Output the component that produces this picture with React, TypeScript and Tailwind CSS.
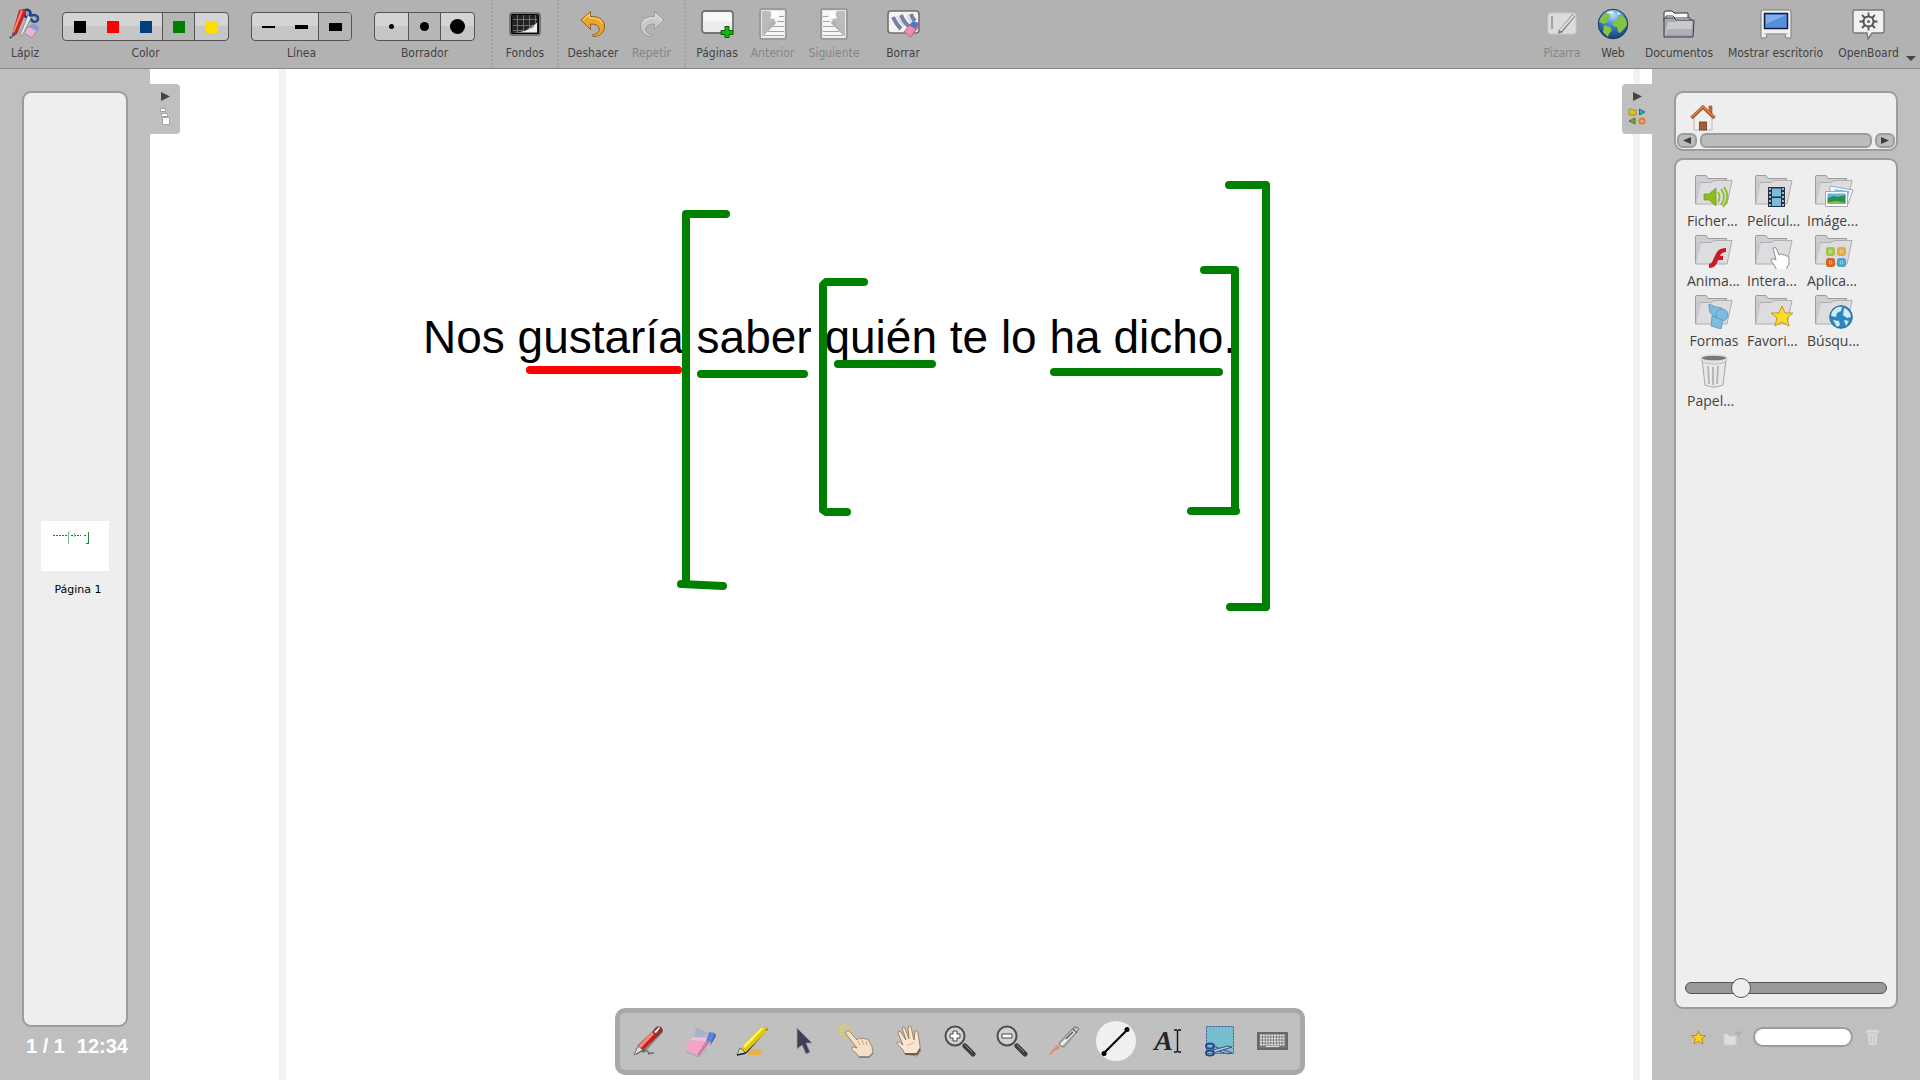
import type { ReactNode } from 'react';

const uiFont = 'font-["DejaVu_Sans_Condensed","Noto_Sans",sans-serif]';

function Svg({ w, h, box, children }: { w: number; h: number; box?: string; children: ReactNode }) {
  return (
    <svg width={w} height={h} viewBox={box ?? `0 0 ${w} ${h}`} fill="none" aria-hidden="true">
      {children}
    </svg>
  );
}

/* ---------- top toolbar icons ---------- */

const PencilCase = () => (
  <Svg w={32} h={32}>
    <path d="M15 3c3-3 8 0 6 4-1 3-4 3-5 1z" stroke="#1f3f74" strokeWidth="2.500" fill="#8fa3c4" />
    <path d="M22 8c5-3 9 2 6 5-3 2-6 0-6-3" stroke="#274b86" strokeWidth="2.500" />
    <path d="M19 7l3 3-9 18-2-1z" fill="#e6e8ec" stroke="#6c7688" strokeWidth=".7" />
    <path d="M10 2l5-1 2 3-9 22-5 3 1-6z" fill="#c92420" />
    <path d="M12 2l2 1-9 22-2 1z" fill="#ef8d86" />
    <path d="M4 24l3 2-5 4z" fill="#555" />
    <path d="M2 29l-1 1" stroke="#333" strokeWidth="2" />
    <path d="M18 20l7-4 5 4-7 10-8-5z" fill="#e9b3cf" stroke="#98708e" strokeWidth=".6" />
    <path d="M20 19l5-3 5 4-2 3z" fill="#7a9fd8" />
  </Svg>
);

const Grid = () => (
  <Svg w={32} h={24}>
    <rect x="1" y="1" width="30" height="22" rx="2.5" fill="#222" stroke="#777" strokeWidth="2" />
    <rect x="2.5" y="2.5" width="27" height="19" rx="1.5" stroke="#050505" />
    <path d="M8.500 3v17M14.500 3v17M20.500 3v14M26.500 3v8M4 7.500h24M4 13.500h20M4 18.500h10" stroke="#8c8c8c" strokeWidth=".7" />
    <path d="M4 20.500c10 0 18-3 24-10v10z" fill="#eee" />
    <path d="M11 19c7-1 12-4 16-9l-3 6z" fill="#999" />
  </Svg>
);

const Undo = ({ muted }: { muted?: boolean }) => (
  <Svg w={26} h={28}>
    <g transform={muted ? 'translate(26 0) scale(-1 1)' : undefined}>
      <path
        d="M1 10L10.500 1.500v5C20 6 25 11 24.500 17c-.5 5-4 9-9.500 9.500-2 .2-3-.5-3-1.500 6-1 8-4 7-7-1-3-4-4-8.500-4v5.500z"
        fill={muted ? '#c9c9c9' : '#eba62c'}
        stroke={muted ? '#9b9b9b' : '#8b651f'}
        strokeLinejoin="round"
      />
      <path d="M3 10L9.500 4v4C16 7.500 21 10 22.500 14" stroke={muted ? '#dedede' : '#f8cf70'} strokeWidth="1.200" />
    </g>
  </Svg>
);

const PagesIcon = () => (
  <Svg w={33} h={28}>
    <rect x="1" y="1" width="31" height="22" rx="3" fill="#ececec" stroke="#737373" strokeWidth="1.800" />
    <rect x="2.500" y="2.500" width="28" height="9" rx="1" fill="#f8f8f8" />
    <path d="M24 16.500h4v4h4v4h-4v3h-4v-3h-4v-4h4z" fill="#12b512" stroke="#075e07" strokeLinejoin="round" />
  </Svg>
);

const PageStep = ({ flip }: { flip?: boolean }) => (
  <Svg w={28} h={32}>
    <g transform={flip ? 'translate(28 0) scale(-1 1)' : undefined}>
      <rect x="1" y="1" width="26" height="30" rx="2" fill="#b9b9b9" stroke="#929292" strokeWidth="1.500" />
      <rect x="2.500" y="2.500" width="23" height="27" fill="#bcbcbc" stroke="#e8e8e8" />
      <path d="M11 3h14v26H3l14-14z" fill="#f6f6f6" />
      <path d="M17 15L12 11q5 1 5-3L4 28z" fill="#a4a4a4" opacity=".500" />
      <path d="M13 3q7 0 5 5-2 4-7 2 2-3 2-7z" fill="#fff" />
      <path d="M20 8.500h5M18 13.500h7M14 18.500h11M9 23.500h16M5 27.500h20" stroke="#a3a3a3" />
    </g>
  </Svg>
);

const ClearIcon = () => (
  <Svg w={33} h={28}>
    <rect x="1" y="1" width="31" height="22" rx="3" fill="#f4f4f4" stroke="#707070" strokeWidth="1.600" />
    <path d="M6 7q3 7 8 12M14 5q3 8 8 11M24 4q1 4 4 7" stroke="#7482a6" strokeWidth="4" />
    <path d="M10 6q3 6 7 10M20 5q2 5 5 8" stroke="#cfd5e4" strokeWidth="1.500" />
    <path d="M17 22l5-7 7 4-5 8z" fill="#f08bb2" stroke="#a04a74" strokeWidth=".6" />
    <path d="M22 15l4-4 6 2-3 6z" fill="#5377c9" />
    <path d="M29 19l3-6v4l-8 10z" fill="#c9527c" />
  </Svg>
);

const BoardIcon = () => (
  <Svg w={30} h={24}>
    <rect x="1" y="1" width="28" height="21" rx="2.500" fill="#dcdcdc" stroke="#c8c8c8" />
    <path d="M5 4v13" stroke="#8f8f8f" strokeWidth="1.500" />
    <path d="M13 20L27 3" stroke="#888" strokeWidth="4" />
    <path d="M13 19L27 3" stroke="#ddd" strokeWidth="2" />
    <path d="M11 22l1-4 3 2z" fill="#777" />
  </Svg>
);

const Globe = () => (
  <Svg w={32} h={32}>
    <defs>
      <radialGradient id="sea" cx=".5" cy=".2" r=".85">
        <stop stopColor="#b8def5" />
        <stop offset=".45" stopColor="#3d80c4" />
        <stop offset="1" stopColor="#12386e" />
      </radialGradient>
    </defs>
    <circle cx="16" cy="16" r="14.800" fill="url(#sea)" stroke="#1c3c66" />
    <path d="M4 9c3-4 7-4 9-3l-1 4-3 1 2 3-4 2-5-2zM7 17l6 2 2 3-3 4-1 3-5-5zM16 15l3-4 4-1 1-3c4 2 6 6 6 10l-3 4-4 4-2-1-1-5-4-1z" fill="#83c441" />
    <path d="M9 5c3-2 5-2 8-1l-2 2zM20 4l4 2-3 1z" fill="#e9f5f8" />
  </Svg>
);

const DocsIcon = () => (
  <Svg w={32} h={30}>
    <path d="M1 4q0-2 2-2h6l2 2h14v8H1z" fill="#f8f8f8" stroke="#333" />
    <path d="M3 7h7l2 2h15v7H3z" fill="#fff" stroke="#444" />
    <path d="M1 28V10q0-1 1-1h9l2 2h17q1 0 1 1l-1 16z" fill="#a8aab1" stroke="#383a40" />
    <path d="M5 13h8l2-1h14l-1 14H2z" fill="#c9cad0" />
    <path d="M2 27l3-7h24l-1 7z" fill="#9496a0" opacity=".5" />
  </Svg>
);

const DesktopIcon = () => (
  <Svg w={32} h={31}>
    <path d="M3 1h26q2 0 2 2v26h-5l-1-4H7l-1 4H1V3q0-2 2-2z" fill="#f0f0f0" stroke="#7c7c7c" />
    <path d="M4 25h24" stroke="#aaa" />
    <rect x="4.500" y="4.500" width="23" height="15" fill="#558edb" stroke="#15233c" strokeWidth="1.500" />
    <path d="M6 6h20L6 15z" fill="#81afea" />
  </Svg>
);

const OpenBoardIcon = () => (
  <Svg w={33} h={31}>
    <path d="M3 1h27q2 0 2 2v19q0 2-2 2H20l-4 6-1-6H3q-2 0-2-2V3q0-2 2-2z" fill="#f1f1f1" stroke="#777" strokeWidth="1.400" />
    <circle cx="16.500" cy="12.500" r="5" stroke="#555" strokeWidth="2" />
    <circle cx="16.500" cy="12.500" r="1.500" fill="#666" />
    <path d="M16.500 3.500v4M16.500 17.500v4M7.500 12.500h4M21.500 12.500h4M10 6l3 3M20 16l3 3M23 6l-3 3M13 16l-3 3" stroke="#555" strokeWidth="1.800" />
  </Svg>
);

/* ---------- toolbar pieces ---------- */

function Tool({ label, width, icon, disabled }: { label: string; width: string; icon: ReactNode; disabled?: boolean }) {
  return (
    <button disabled={disabled} className={`flex shrink-0 flex-col items-center pt-2 ${width} ${disabled ? 'text-[#868686]' : 'text-[#424242]'}`}>
      <span className="flex h-8 items-center justify-center">{icon}</span>
      <span className="mt-[5px] text-xs whitespace-nowrap">{label}</span>
    </button>
  );
}

const Separator = () => <div className="w-px shrink-0 self-stretch border-l-2 border-dotted border-[#a3a3a3]" />;

function Group({ label, items, active }: { label: string; items: { name: string; mark: ReactNode }[]; active: number }) {
  return (
    <div role="group" aria-label={label} className="flex shrink-0 flex-col items-center pt-3 text-[#424242]">
      <div className="flex h-[29px] overflow-hidden rounded-[4px] border border-[#555] bg-linear-to-b from-[#d4d4d4] from-50% to-[#c6c6c6] to-50%">
        {items.map((it, i) => (
          <button
            key={it.name}
            aria-label={it.name}
            aria-pressed={i === active}
            className={`flex w-[33px] items-center justify-center ${i === active ? `bg-[#b6b6b6] border-l border-[#555] ${i < items.length - 1 ? 'border-r' : ''}` : ''}`}
          >
            {it.mark}
          </button>
        ))}
      </div>
      <span className="mt-1 text-xs">{label}</span>
    </div>
  );
}

const colors = [
  { name: 'Negro', mark: <span className="size-3 bg-black" /> },
  { name: 'Rojo', mark: <span className="size-3 bg-[#ff0000]" /> },
  { name: 'Azul', mark: <span className="size-3 bg-[#004080]" /> },
  { name: 'Verde', mark: <span className="size-3 bg-[#008000]" /> },
  { name: 'Amarillo', mark: <span className="size-3 bg-[#ffdd00]" /> },
];
const lines = [
  { name: 'Fina', mark: <span className="h-0.5 w-[13px] bg-black" /> },
  { name: 'Media', mark: <span className="h-1 w-[13px] bg-black" /> },
  { name: 'Gruesa', mark: <span className="h-2 w-[13px] bg-black" /> },
];
const erasers = [
  { name: 'Pequeño', mark: <span className="size-[5px] rounded-full bg-black" /> },
  { name: 'Mediano', mark: <span className="size-[9px] rounded-full bg-black" /> },
  { name: 'Grande', mark: <span className="size-[15px] rounded-full bg-black" /> },
];

function TopBar() {
  return (
    <header className="flex h-[69px] shrink-0 items-stretch border-b border-[#858585] bg-[#b2b2b2]">
      <Tool label="Lápiz" width="w-[50px]" icon={<PencilCase />} />
      <div className="ml-3 flex gap-[22px]">
        <Group label="Color" items={colors} active={3} />
        <Group label="Línea" items={lines} active={2} />
        <Group label="Borrador" items={erasers} active={1} />
      </div>
      <div className="ml-4 flex">
        <Separator />
        <Tool label="Fondos" width="w-16" icon={<Grid />} />
        <Separator />
      </div>
      <div className="ml-0.5 flex">
        <Tool label="Deshacer" width="w-16" icon={<Undo />} />
        <Tool label="Repetir" width="w-[53px]" icon={<Undo muted />} disabled />
      </div>
      <div className="ml-1.5 flex gap-1">
        <Separator />
        <div className="flex">
          <Tool label="Páginas" width="w-[54px]" icon={<PagesIcon />} />
          <Tool label="Anterior" width="w-[57px]" icon={<PageStep />} disabled />
          <Tool label="Siguiente" width="w-[66px]" icon={<PageStep flip />} disabled />
        </div>
      </div>
      <div className="ml-[9px] flex">
        <Tool label="Borrar" width="w-[54px]" icon={<ClearIcon />} />
      </div>
      <div className="ml-auto flex">
        <Tool label="Pizarra" width="w-11" icon={<BoardIcon />} disabled />
        <Tool label="Web" width="w-[58px]" icon={<Globe />} />
        <Tool label="Documentos" width="w-[74px]" icon={<DocsIcon />} />
        <Tool label="Mostrar escritorio" width="w-[119px]" icon={<DesktopIcon />} />
        <Tool label="OpenBoard" width="w-[67px]" icon={<OpenBoardIcon />} />
        <button aria-label="Más opciones" className="flex w-[18px] items-end justify-center pb-[7px]">
          <Svg w={10} h={5}><path d="M0 0h10L5 5z" fill="#444" /></Svg>
        </button>
      </div>
    </header>
  );
}

/* ---------- left column ---------- */

function PagesPanel() {
  return (
    <aside className="flex w-[150px] shrink-0 flex-col bg-[#bfbfbf] px-[22px] pt-[22px]">
      <div className="flex flex-1 flex-col items-center justify-center rounded-[9px] border-2 border-[#9c9c9c] bg-[#eeeeee]">
        <button className="flex flex-col items-center">
          <span className="block bg-white">
            <Svg w={68} h={50}>
              <path d="M12 14.500h15M30 14.500h10M43 14.500h3" stroke="#555" strokeDasharray="2 1" />
              <path d="M27.500 11v12M27 11h2M33.500 12v4" stroke="#7cc095" />
              <path d="M47.500 11v12M45 22.500h2" stroke="#2a8345" />
            </Svg>
          </span>
          <span className='mt-[11px] pl-1.5 font-["DejaVu_Sans",sans-serif] text-[11px] leading-4 text-black'>Página 1</span>
        </button>
      </div>
      <div className='flex h-[53px] justify-between pt-[7px] pl-1 font-["Liberation_Sans",Arial,sans-serif] text-xl leading-6 font-bold text-white'>
        <span>1 / 1</span>
        <time>12:34</time>
      </div>
    </aside>
  );
}

/* ---------- whiteboard ---------- */

function Board() {
  return (
    <main className="relative min-w-0 flex-1 overflow-hidden bg-white">
      <div className="flex h-full justify-between pr-3 pl-[129px]">
        <div className="w-[7px] bg-[#f2f2f2]" />
        <div className="w-[7px] bg-[#f2f2f2]" />
      </div>
      <p className='absolute top-[242px] left-[273px] font-["Liberation_Sans",Arial,sans-serif] text-[46px] leading-[52px] whitespace-nowrap text-black'>
        Nos gustaría saber quién te lo ha dicho.
      </p>
      <svg className="absolute top-0 left-0" width="1160" height="600" viewBox="150 69 1160 600" fill="none" stroke="#008000" strokeWidth="8" strokeLinecap="round" strokeLinejoin="round" aria-hidden="true">
        <path d="M530 370H678" stroke="#ff0000" />
        <path d="M701 374H804M838 364H932M1054 372H1219" />
        <path d="M726 214H686V584M681 584L723 586" />
        <path d="M864 282H826L823 285V510L826 512H847" />
        <path d="M1204 270H1235V511H1191M1235 511h1" />
        <path d="M1229 185H1266V607H1230" />
      </svg>
      <button aria-label="Páginas" className="absolute top-[15px] left-0 flex h-[50px] w-[30px] flex-col items-center rounded-r-[4px] bg-[#bfbfbf] pt-2">
        <Svg w={9} h={9}><path d="M0 0L9 4.500L0 9z" fill="#444" /></Svg>
        <span className="mt-[7px]">
          <Svg w={10} h={17}>
            <path d="M.500 .500h5v3h-5zM1.500 5.500h6v3h-6zM2.500 9.500h7v7h-7z" fill="#fff" stroke="#8d8d8d" strokeWidth=".700" />
          </Svg>
        </span>
      </button>
      <button aria-label="Biblioteca" className="absolute top-[15px] right-0 flex h-[50px] w-[30px] flex-col items-center rounded-l-[4px] bg-[#bfbfbf] pt-2">
        <Svg w={9} h={9}><path d="M0 0L9 4.500L0 9z" fill="#444" /></Svg>
        <span className="mt-[7px]">
          <Svg w={18} h={17}>
            <path d="M1 1h3l1 1h3v5H1z" fill="#d8c51c" stroke="#998c12" strokeWidth=".800" />
            <path d="M11.500 1l5.500 3-5.500 3z" fill="#38a6b4" stroke="#1c7280" />
            <path d="M7 10v6l-6-3z" fill="#8f9c35" stroke="#66701f" />
            <circle cx="14" cy="13" r="2.600" stroke="#ee7a1c" strokeWidth="2" />
          </Svg>
        </span>
      </button>
    </main>
  );
}

/* ---------- library ---------- */

const Folder = ({ children }: { children: ReactNode }) => (
  <Svg w={42} h={36}>
    <path d="M2.500 30V3.500q0-1 1-1H13l2 3h18.500V12" fill="#cfcfd2" stroke="#9c9ca0" />
    <path d="M2.500 31L7 9.500h11l3-2h18L34 31z" fill="#dddde0" stroke="#aeaeb3" />
    <path d="M3 31V8L8 10z" fill="#c9c9cd" />
    {children}
  </Svg>
);

const AudioArt = () => (
  <>
    <path d="M11 21h5l7-6v18l-7-6h-5z" fill="#8dbb24" stroke="#719a16" strokeWidth=".700" />
    <path d="M25 19q3 5 0 10M28 16q6 8 0 16M31 14q7 10-1 20" stroke="#93bf2d" strokeWidth="1.900" />
  </>
);
const FilmArt = () => (
  <>
    <path d="M15 14h17v20H15z" fill="#26323d" />
    <path d="M19 15.500h9v8h-9zM19 25h9v8h-9z" fill="#79bce0" />
    <path d="M17 15v19M30 15v19" stroke="#dde" strokeWidth="1.500" strokeDasharray="2 2" />
  </>
);
const PictureArt = () => (
  <>
    <path d="M17 13l23 4-5 14-18-3z" fill="#fff" stroke="#93a9b6" />
    <path d="M20 16l17 2-3 10z" fill="#86c2e8" />
    <path d="M12.500 18.500h22v15h-22z" fill="#fff" stroke="#a3a9ac" />
    <path d="M14.500 20.500h18v5h-18z" fill="#62b5df" />
    <path d="M14.500 25l6-2 4 1 8-2v9h-18z" fill="#2d8d4a" />
    <path d="M15 29l9-1 8 2v1H15z" fill="#7ec04c" />
  </>
);
const FlashArt = () => (
  <path d="M33 15c-9 0-10 6-13 12-1 3-2 3-4 4v4c6 0 8-4 9-8h5v-4h-3c1-3 3-4 6-4z" fill="#d01722" />
);
const HandArt = () => (
  <path d="M20 15q3-2 4 2l2 5 1-1q2-1 3 1 2-1 3 1 3-1 3 2v6l-2 3v3H24l-5-8q-3-4 2-3l2 1z" fill="#fff" stroke="#8b8b8b" />
);
const AppsArt = () => (
  <>
    <rect x="13" y="14" width="9" height="9" rx="2.500" fill="#9fc64a" /><rect x="24" y="14" width="9" height="9" rx="2.500" fill="#eba937" />
    <rect x="13" y="25" width="9" height="9" rx="2.500" fill="#dd6420" /><rect x="24" y="25" width="9" height="9" rx="2.500" fill="#48a5c9" />
    <g stroke="#fff" strokeOpacity=".500"><circle cx="17.500" cy="18.500" r="1.500" /><circle cx="28.500" cy="18.500" r="1.500" /><circle cx="17.500" cy="29.500" r="1.500" /><circle cx="28.500" cy="29.500" r="1.500" /></g>
  </>
);
const ShapesArt = () => (
  <g fill="#7ebbdf" stroke="#5497c0" strokeWidth=".800">
    <path d="M16 11q5 3 13 4l-4 10q-10-2-9-14z" /><circle cx="29" cy="22" r="6" /><path d="M19 23l11 4-2 9-10-3z" />
  </g>
);
const starPath = 'M29 13l3 7h8l-6 5 2 8-7-4-7 4 2-8-6-5h8z';
const StarArt = () => <path d={starPath} fill="#fbdd29" stroke="#c29719" strokeLinejoin="round" />;
const SearchArt = () => (
  <>
    <circle cx="28" cy="24" r="11.300" fill="#2f86bd" stroke="#266e9e" />
    <path d="M19 19q4-6 10-5l-1 4-4 2-1 4-5-1zM31 15q6 2 7 9l-4 1-4-3zM20 27l6 1 1 4-3 2zM31 27l5 1-3 5z" fill="#d2ebf5" />
  </>
);

const Trash = () => (
  <Svg w={28} h={34}>
    <path d="M2 5l3 26q9 4 18 0l3-26z" fill="#e8e8ea" stroke="#a8a8ab" />
    <path d="M8 12l1 18M13 13v18M18 12l-1 18" stroke="#b4b4b8" strokeWidth="1.800" />
    <path d="M1 5q0 5 13 5t13-5" stroke="#bbb" fill="#e5e5e7" />
    <ellipse cx="14" cy="4" rx="13" ry="3" fill="#77777b" stroke="#ddd" strokeWidth="1.500" />
  </Svg>
);

const library: { label: string; icon: ReactNode }[] = [
  { label: 'Ficher...', icon: <Folder><AudioArt /></Folder> },
  { label: 'Películ...', icon: <Folder><FilmArt /></Folder> },
  { label: 'Imáge...', icon: <Folder><PictureArt /></Folder> },
  { label: 'Anima...', icon: <Folder><FlashArt /></Folder> },
  { label: 'Intera...', icon: <Folder><HandArt /></Folder> },
  { label: 'Aplica...', icon: <Folder><AppsArt /></Folder> },
  { label: 'Formas', icon: <Folder><ShapesArt /></Folder> },
  { label: 'Favori...', icon: <Folder><StarArt /></Folder> },
  { label: 'Búsqu...', icon: <Folder><SearchArt /></Folder> },
  { label: 'Papel...', icon: <Trash /> },
];

function Library() {
  return (
    <aside className="flex w-[268px] shrink-0 flex-col bg-[#bfbfbf] pt-[22px] pr-[22px] pl-[22px]">
      <div className="flex h-[60px] flex-col justify-between rounded-[9px] border-2 border-[#9c9c9c] bg-[#eeeeee]">
        <button aria-label="Inicio" className="mt-[11px] ml-3.5 w-[26px]">
          <Svg w={26} h={27}>
            <path d="M4 13l9-9 9 9v13H4z" fill="#eee" stroke="#b9b9b9" />
            <path d="M19 2h3v9l-3-3z" fill="#c66a35" stroke="#95461d" strokeWidth=".600" />
            <path d="M1.500 14L13 3l11.500 11" stroke="#a94e24" strokeWidth="3.400" />
            <path d="M2 13L13 2.500 24 13" stroke="#e08a4f" strokeWidth="1.300" />
            <rect x="9.500" y="18" width="7" height="8" fill="#a0603a" stroke="#6a3a1e" strokeWidth=".800" />
          </Svg>
        </button>
        <div className="flex h-4 gap-[3px] px-px pb-px">
          <button aria-label="Desplazar a la izquierda" className="flex w-5 items-center justify-center rounded-[6px] border-2 border-[#9c9c9c] bg-[#bcbcbc]">
            <Svg w={8} h={7}><path d="M8 0v7L0 3.500z" fill="#3d3d3d" /></Svg>
          </button>
          <div className="flex-1 rounded-[6px] border-2 border-[#9c9c9c] bg-[#bcbcbc]" />
          <button aria-label="Desplazar a la derecha" className="flex w-5 items-center justify-center rounded-[6px] border-2 border-[#9c9c9c] bg-[#bcbcbc]">
            <Svg w={8} h={7}><path d="M0 0v7l8-3.500z" fill="#3d3d3d" /></Svg>
          </button>
        </div>
      </div>
      <div className="mt-[7px] flex flex-1 flex-col justify-between rounded-[9px] border-2 border-[#9c9c9c] bg-[#eeeeee] px-[9px] pt-3 pb-[9px]">
        <div className="grid grid-cols-[repeat(auto-fill,60px)] pl-0.5">
          {library.map((it) => (
            <button key={it.label} className="flex h-[60px] w-[54px] flex-col items-center">
              <span className="flex h-[39px] items-center justify-center pb-px">{it.icon}</span>
              <span className={`font-["Open_Sans","Noto_Sans",sans-serif] text-sm leading-5 text-[#424242] ${it.label.endsWith('...') ? 'self-start' : ''}`}>{it.label}</span>
            </button>
          ))}
        </div>
        <input
          type="range"
          aria-label="Tamaño de los iconos"
          min={0}
          max={100}
          defaultValue={25}
          className="h-5 w-full appearance-none bg-transparent [&::-webkit-slider-runnable-track]:h-3 [&::-webkit-slider-runnable-track]:rounded-full [&::-webkit-slider-runnable-track]:border [&::-webkit-slider-runnable-track]:border-[#555] [&::-webkit-slider-runnable-track]:bg-[#999] [&::-webkit-slider-thumb]:-mt-[5px] [&::-webkit-slider-thumb]:size-5 [&::-webkit-slider-thumb]:appearance-none [&::-webkit-slider-thumb]:rounded-full [&::-webkit-slider-thumb]:border [&::-webkit-slider-thumb]:border-[#555] [&::-webkit-slider-thumb]:bg-[#eee]"
        />
      </div>
      <div className="flex h-[71px] items-start pt-[18px] pl-4">
        <button aria-label="Favoritos" className="flex h-5 items-center">
          <Svg w={17} h={17} box="16 11 26 24"><path d={starPath} fill="#fcd21b" stroke="#b98c1c" strokeWidth="1.500" strokeLinejoin="round" /></Svg>
        </button>
        <button aria-label="Nueva carpeta" className="ml-4 flex h-5 items-center" disabled>
          <Svg w={20} h={17}><path d="M1 5h4l1 2h7v9H1z" fill="#dedede" stroke="#cdcdcd" /><path d="M12 4h7M15.500 1v7" stroke="#adadad" strokeWidth="1.300" /></Svg>
        </button>
        <input type="search" aria-label="Buscar" className="ml-2.5 h-5 w-[100px] rounded-full border-2 border-[#9c9c9c] bg-white px-2 text-xs" />
        <button aria-label="Eliminar" className="ml-3 flex h-5 items-center opacity-80" disabled>
          <Svg w={15} h={17}><path d="M1 1h13v3H1zM2.500 4h10l-1 12h-8z" fill="#e2e2e2" stroke="#ccc" /><path d="M6 6v8M9 6v8" stroke="#bbb" /></Svg>
        </button>
      </div>
    </aside>
  );
}

/* ---------- floating palette ---------- */

const Pen = () => (
  <Svg w={32} h={32}>
    <path d="M4 29q8-5 11-3t1 3q3-1 6-1" stroke="#63706f" strokeWidth="1.500" />
    <path d="M7 26L27 5q4-1 4 2L12 28z" fill="#4b4b4b" opacity=".500" />
    <path d="M3 28l3-8L22 5l6 4-17 16z" fill="#c31f1b" />
    <path d="M5 22L24 3l3 1L8 24z" fill="#ee8c84" />
    <path d="M20 7l4-5q4-2 6 1t-1 5l-4 4z" fill="#8e3430" />
    <path d="M22 7l5-5 1 1-4 5z" fill="#fff" />
    <path d="M2 30l4-9 5 4z" fill="#ddd" stroke="#555" strokeWidth=".700" />
  </Svg>
);
const Eraser = () => (
  <Svg w={32} h={32}>
    <path d="M12 2l12 6-9 7-5-2z" fill="#8fa6d0" opacity=".500" />
    <path d="M6 15l16 1-9 14L1 25z" fill="#f5a3c9" />
    <path d="M22 16l4 1-11 14-2-1z" fill="#d079a6" />
    <path d="M6 15l4-3 13 1-1 3z" fill="#f3c0da" />
    <path d="M22 16l3-9 6 1-4 9z" fill="#5c82da" />
    <path d="M27 17l4-9 1 3-6 10z" fill="#3d5fb0" />
    <path d="M2 27l13 5 8-7" stroke="#888" strokeWidth="1" opacity=".500" />
  </Svg>
);
const Marker = () => (
  <Svg w={32} h={32}>
    <path d="M12 30q1-6 9-6l5 1-2 5z" fill="#f2a72a" opacity=".800" />
    <path d="M5 28L29 3l3 1L11 28z" fill="#333" />
    <path d="M4 24L24 3l7-1-1 5-21 21z" fill="#dfc80c" />
    <path d="M7 21L25 3h3L9 23z" fill="#fff269" />
    <path d="M1 30l3-7 6 5z" fill="#ddd" stroke="#444" strokeWidth=".700" />
    <path d="M1 30l9-2" stroke="#222" strokeWidth="1.500" />
  </Svg>
);
const Cursor = () => (
  <Svg w={32} h={32}>
    <path d="M9 3v21l5-4 4 9 4-2-4-9h6z" fill="#3f3f52" stroke="#9999a6" strokeWidth=".800" />
  </Svg>
);
const Pointing = () => (
  <Svg w={36} h={34}>
    <path d="M7 0v5M7 9v6M0 7h5M9 7h5M2 2l3 3M9 5l3-3M2 12l3-3" stroke="#e9d33c" strokeWidth="1.300" />
    <path d="M9 7q2-1 4 2l6 7q1-3 4-1 2-2 4 0 3-1 4 2 4 5 4 12l-4 4H21q-2-4-6-6-3-4 1-4l3 1L8 10q-1-2 1-3z" fill="#f6dfc8" stroke="#9a7c64" strokeWidth=".900" />
    <path d="M20 17l2 4M24 16l2 5M28 17l1 4" stroke="#b99478" strokeWidth=".800" />
    <path d="M21 33h10l4-4" stroke="#735d4c" strokeWidth="1.500" opacity=".600" />
  </Svg>
);
const OpenHand = () => (
  <Svg w={26} h={32}>
    <path d="M10 29q-2-5-6-8-3-3-2-4 2-1 6 3L3 8q0-3 2-2l6 9L7 3q1-2 3 0l4 11-1-12q2-2 3 0l3 13 1-9q2-2 3 1l2 14v6l-3 4z" fill="#f8e5d2" stroke="#96785f" strokeWidth=".900" />
    <path d="M10 29h12l3-5" stroke="#735d4c" strokeWidth="1.800" />
    <path d="M12 20q4 0 8-3" stroke="#d5b79c" />
  </Svg>
);
const Zoom = ({ plus }: { plus?: boolean }) => (
  <Svg w={32} h={32}>
    <path d="M19 19l4 4" stroke="#8b8b8b" strokeWidth="3" />
    <path d="M21 21l8 8" stroke="#3e3e3e" strokeWidth="5" strokeLinecap="round" />
    <path d="M21 20l7 7" stroke="#8d8d8d" strokeWidth="1" />
    <circle cx="11" cy="11" r="9.500" fill="#d2d2d2" stroke="#4e4e4e" strokeWidth="2" />
    <path d={plus ? 'M9 6h4v3h3v4h-3v3H9v-3H6V9h3z' : 'M6 9h10v4H6z'} fill="#fff" stroke="#444" />
  </Svg>
);
const Laser = () => (
  <Svg w={32} h={32}>
    <path d="M1 30q3-6 9-10l2 3q-5 2-10 7z" fill="#ef7a70" opacity=".850" />
    <path d="M11 18L26 2q4-1 5 2L16 22q-4 0-5-4z" fill="#b9b9b9" stroke="#6b6b6b" strokeWidth=".900" />
    <path d="M13 20L28 5" stroke="#f7f7f7" strokeWidth="2" />
    <path d="M18 14L25 7" stroke="#555" strokeWidth="1.500" />
    <path d="M25 4l4 4" stroke="#666" strokeWidth="1.500" />
  </Svg>
);
const Line = () => (
  <Svg w={40} h={40}>
    <path d="M8 32L31 9" stroke="#000" strokeWidth="2.200" />
    <circle cx="8" cy="32.500" r="2.500" fill="#000" /><circle cx="31" cy="8.500" r="2.500" fill="#000" />
  </Svg>
);
const TextTool = () => (
  <span className="flex items-center">
    <span className='font-["Liberation_Serif",serif] text-[28px] leading-8 font-bold text-[#262626] italic'>A</span>
    <Svg w={9} h={24}><path d="M1 1h3M5 1h3M1 23h3M5 23h3M4.500 1v22" stroke="#111" strokeWidth="1.400" /></Svg>
  </span>
);
const Capture = () => (
  <Svg w={30} h={32}>
    <rect x="2" y="2" width="26" height="26" fill="#76bdcd" />
    <rect x="1.500" y="1.500" width="27" height="27" stroke="#2a5d9c" strokeDasharray="2 1" />
    <path d="M8 21l19 7q-4 2-8 0L8 24z" fill="#a3aec8" stroke="#34508c" />
    <path d="M8 28l19-6q-4-2-8 0L8 25z" fill="#c0c9dc" stroke="#34508c" />
    <ellipse cx="5" cy="21" rx="4" ry="2.600" stroke="#27478a" strokeWidth="2" />
    <ellipse cx="5" cy="28" rx="4" ry="2.600" stroke="#27478a" strokeWidth="2" />
  </Svg>
);
const Keyboard = () => (
  <Svg w={31} h={18}>
    <rect x=".800" y=".800" width="29.400" height="16.400" fill="#777" stroke="#555" strokeWidth="1.200" />
    <path d="M3 3.500h25M3 6.500h25M3 9.500h25M3 12.500h25" stroke="#e8e8e8" strokeWidth="2" strokeDasharray="2 .800" />
    <path d="M9 14.500h13" stroke="#ddd" />
  </Svg>
);

const palette: { name: string; icon: ReactNode; active?: boolean }[] = [
  { name: 'Bolígrafo', icon: <Pen /> },
  { name: 'Goma', icon: <Eraser /> },
  { name: 'Marcador', icon: <Marker /> },
  { name: 'Seleccionar', icon: <Cursor /> },
  { name: 'Interactuar', icon: <Pointing /> },
  { name: 'Mover página', icon: <OpenHand /> },
  { name: 'Acercar', icon: <Zoom plus /> },
  { name: 'Alejar', icon: <Zoom /> },
  { name: 'Puntero láser', icon: <Laser /> },
  { name: 'Dibujar líneas', icon: <Line />, active: true },
  { name: 'Escribir texto', icon: <TextTool /> },
  { name: 'Capturar', icon: <Capture /> },
  { name: 'Teclado virtual', icon: <Keyboard /> },
];

function Palette() {
  return (
    <div role="toolbar" aria-label="Herramientas" className="absolute bottom-[5px] left-1/2 flex h-[67px] -translate-x-1/2 items-center rounded-[10px] border-5 border-[#a9a9a9] bg-[#c0c0c0] px-0.5 pb-0.5">
      {palette.map((t) => (
        <button key={t.name} aria-label={t.name} aria-pressed={!!t.active} className="flex w-[52px] items-center justify-center">
          <span className={`flex size-10 items-center justify-center rounded-full ${t.active ? 'bg-[#f0f0f0]' : ''}`}>{t.icon}</span>
        </button>
      ))}
    </div>
  );
}

export default function App() {
  return (
    <div className={`relative flex h-screen flex-col overflow-hidden ${uiFont}`}>
      <TopBar />
      <div className="flex min-h-0 flex-1">
        <PagesPanel />
        <Board />
        <Library />
      </div>
      <Palette />
    </div>
  );
}
